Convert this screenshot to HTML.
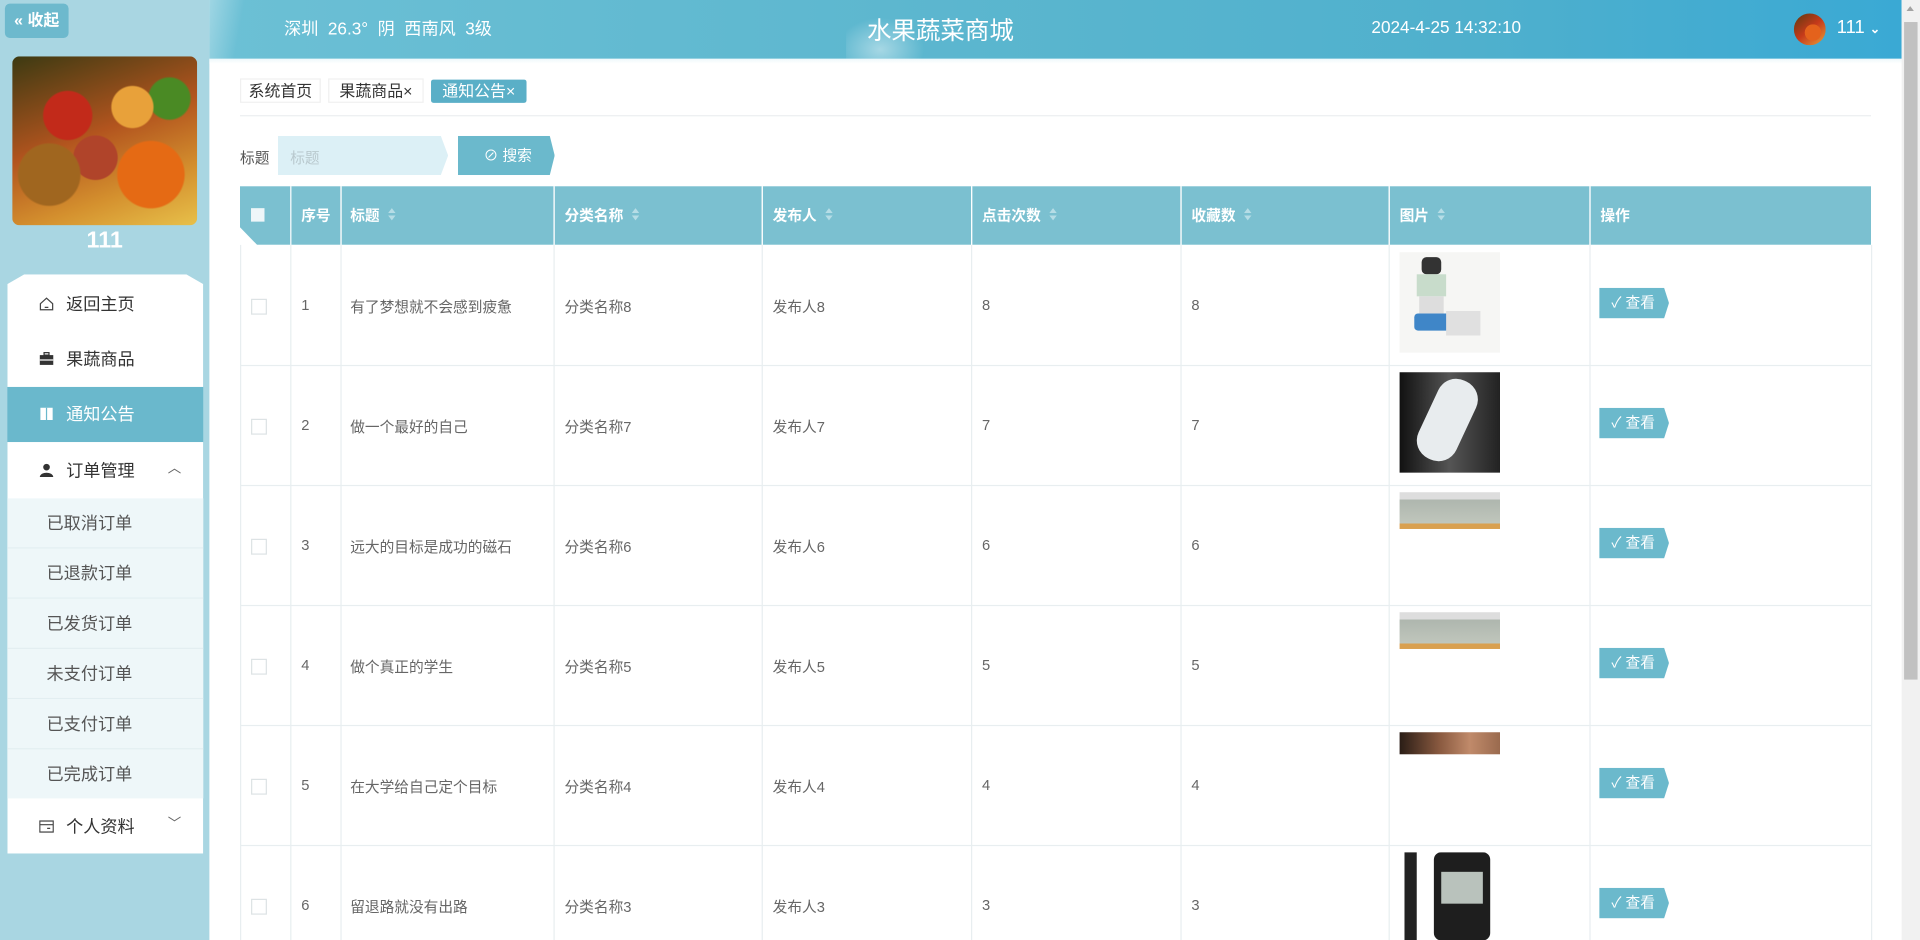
<!DOCTYPE html>
<html><head><meta charset="utf-8">
<style>
html,body{margin:0;padding:0;width:1920px;height:940px;overflow:hidden;background:#fff;}
#w{position:absolute;left:0;top:0;width:1568px;height:768px;transform:scale(1.2244898);transform-origin:0 0;font-family:"Liberation Sans","Noto Sans CJK SC",sans-serif;overflow:hidden;}
.a{position:absolute;}
#side{left:0;top:0;width:171px;height:768px;background:#a9d6e2;}
#hdr{left:171px;top:0;width:1382px;height:48px;background:linear-gradient(90deg,#6cc0d5 0%,#5db7cf 40%,#4fb0cd 75%,#3aa9d4 100%);color:#fff;}
.mi{position:absolute;left:6px;width:160px;height:45px;line-height:45px;font-size:14px;color:#333;}
.mi .ic{position:absolute;left:26px;top:16px;width:12px;height:12px;}
.mi .t{position:absolute;left:48px;}
.si{position:absolute;left:6px;width:160px;height:40px;line-height:40px;font-size:14px;color:#555;background:#eef7f9;border-bottom:1px solid #e2eef1;}
.si span{position:absolute;left:32px;}
.th{position:absolute;top:152px;height:48px;line-height:48px;font-size:12px;font-weight:bold;color:#fff;}
.srt{display:inline-block;margin-left:6px;vertical-align:middle;width:8px;height:12px;position:relative;top:-1px;}
.srt:before{content:"";position:absolute;left:1px;top:0;border:3px solid transparent;border-bottom:4px solid #b6dde6;border-top:0;}
.srt:after{content:"";position:absolute;left:1px;top:6px;border:3px solid transparent;border-top:4px solid #b6dde6;border-bottom:0;}
.vl{position:absolute;width:1px;background:#e8eef0;}
.td{position:absolute;font-size:12px;color:#666;}
.cb{position:absolute;left:205px;width:11px;height:11px;border:1px solid #dde3e5;background:#fff;}
.btn{position:absolute;left:1306px;width:57px;height:25px;line-height:25px;background:#6bb9cc;color:#fff;font-size:12px;clip-path:polygon(0 0,53px 0,57px 50%,53px 100%,0 100%);}
.btn span{position:absolute;left:10px;}
.img{position:absolute;left:1143px;width:82px;overflow:hidden;}
</style></head><body><div id="w">

<div id="side" class="a">
  <div class="a" style="left:4px;top:3px;width:52px;height:28px;background:#6db9cd;border-radius:4px;color:#fff;font-size:13px;font-weight:bold;line-height:28px;text-align:center;">« 收起</div>
  <div class="a" style="left:10px;top:46px;width:151px;height:138px;border-radius:6px;overflow:hidden;background:radial-gradient(circle at 30% 35%,#c22a1a 0 14%,transparent 15%),radial-gradient(circle at 65% 30%,#e8a13a 0 12%,transparent 13%),radial-gradient(circle at 75% 70%,#e56a14 0 18%,transparent 19%),radial-gradient(circle at 20% 70%,#a0661f 0 16%,transparent 17%),radial-gradient(circle at 85% 25%,#4a8a24 0 10%,transparent 11%),radial-gradient(circle at 45% 60%,#b0442a 0 15%,transparent 16%),linear-gradient(160deg,#3c3a12,#b2541e 45%,#d4902e 75%,#e7c04a);"></div>
  <div class="a" style="left:0;top:186px;width:171px;text-align:center;color:#fff;font-size:19px;font-weight:bold;">111</div>
  <div class="a" style="left:6px;top:224px;width:160px;height:473px;background:#fff;clip-path:polygon(14px 0,146px 0,160px 8px,160px 100%,0 100%,0 8px);"></div>
  <div class="mi" style="top:226px;"><svg class="ic" viewBox="0 0 12 12"><path d="M1 6 L6 1.5 L11 6 V11 H1 Z" fill="none" stroke="#444" stroke-width="1"/><path d="M4.5 9 H7.5" stroke="#444"/></svg><span class="t">返回主页</span></div>
  <div class="mi" style="top:271px;"><svg class="ic" viewBox="0 0 12 12"><rect x="0.5" y="3" width="11" height="8" fill="#333"/><rect x="4" y="1" width="4" height="2" fill="none" stroke="#333"/><rect x="0.5" y="6.5" width="11" height="1" fill="#fff"/></svg><span class="t">果蔬商品</span></div>
  <div class="mi" style="top:316px;background:#6ab8cc;color:#fff;"><svg class="ic" viewBox="0 0 12 12"><rect x="1" y="1" width="10" height="10" fill="#fff"/><rect x="5.5" y="1" width="1" height="10" fill="#6ab8cc"/></svg><span class="t">通知公告</span></div>
  <div class="mi" style="top:362px;"><svg class="ic" viewBox="0 0 12 12"><circle cx="6" cy="3.5" r="2.7" fill="#333"/><path d="M0.5 11.5 C1 7,11 7,11.5 11.5 Z" fill="#333"/></svg><span class="t">订单管理</span><span style="position:absolute;left:131px;top:-1px;font-size:11px;color:#666;">︿</span></div>
  <div class="si" style="top:407px;"><span>已取消订单</span></div>
  <div class="si" style="top:448px;"><span>已退款订单</span></div>
  <div class="si" style="top:489px;"><span>已发货订单</span></div>
  <div class="si" style="top:530px;"><span>未支付订单</span></div>
  <div class="si" style="top:571px;"><span>已支付订单</span></div>
  <div class="si" style="top:612px;border-bottom:0;"><span>已完成订单</span></div>
  <div class="mi" style="top:653px;"><svg class="ic" viewBox="0 0 12 12"><rect x="0.5" y="1.5" width="11" height="9" fill="none" stroke="#444"/><path d="M0.5 4.5 H11.5 M6.5 7.5 H9" stroke="#444"/></svg><span class="t">个人资料</span><span style="position:absolute;left:131px;top:-2px;font-size:11px;color:#666;">﹀</span></div>
</div>

<div id="hdr" class="a">
  <div class="a" style="left:0;top:0;width:40px;height:48px;background:linear-gradient(100deg,rgba(255,255,255,.35),transparent 60%);"></div>
  <div class="a" style="left:520px;top:10px;width:70px;height:38px;background:radial-gradient(ellipse at 40% 80%,rgba(255,255,255,.45),transparent 60%);"></div>
  <div class="a" style="left:61px;top:13px;font-size:14px;">深圳&nbsp; 26.3°&nbsp; 阴&nbsp; 西南风&nbsp; 3级</div>
  <div class="a" style="left:537px;top:9px;font-size:20px;">水果蔬菜商城</div>
  <div class="a" style="left:949px;top:14px;font-size:14px;">2024-4-25 14:32:10</div>
  <div class="a" style="left:1294px;top:11px;width:26px;height:26px;border-radius:50%;background:radial-gradient(circle at 60% 60%,#e4621c 0 30%,transparent 31%),linear-gradient(140deg,#5a3a10,#c63a1a 50%,#e9a038);"></div>
  <div class="a" style="left:1329px;top:14px;font-size:15px;">111 <span style="font-size:10px;font-weight:bold;">⌄</span></div>
</div>
<div class="a" style="left:171px;top:48px;width:1382px;height:4px;background:linear-gradient(#eef8fb,#fff);"></div>

<div class="a" style="left:1553px;top:0;width:15px;height:768px;background:#f1f1f1;"></div>
<div class="a" style="left:1555px;top:18px;width:11px;height:537px;background:#c1c1c1;"></div>
<div class="a" style="left:1557px;top:5px;border:3px solid transparent;border-bottom:4px solid #a3a3a3;border-top:0;"></div>

<!-- tabs -->
<div class="a" style="left:196px;top:64px;width:66px;height:20px;line-height:20px;font-size:13px;color:#333;text-align:center;border:1px solid #f0f0f0;box-sizing:border-box;">系统首页</div>
<div class="a" style="left:268px;top:64px;width:78px;height:20px;line-height:20px;font-size:13px;color:#333;text-align:center;border:1px solid #f0f0f0;box-sizing:border-box;">果蔬商品×</div>
<div class="a" style="left:352px;top:65px;width:78px;height:19px;line-height:19px;font-size:13px;color:#fff;text-align:center;background:#5aafc7;border-radius:2px;">通知公告×</div>
<div class="a" style="left:196px;top:94px;width:1332px;height:1px;background:#eceff0;"></div>

<!-- search -->
<div class="a" style="left:196px;top:120px;font-size:12px;color:#555;">标题</div>
<div class="a" style="left:227px;top:111px;width:139px;height:32px;background:#dcf0f6;clip-path:polygon(0 0,133px 0,139px 50%,133px 100%,0 100%);"></div>
<div class="a" style="left:237px;top:120px;font-size:12px;color:#b9c9ce;">标题</div>
<div class="a" style="left:374px;top:111px;width:79px;height:32px;background:#6bb9cc;clip-path:polygon(0 0,75px 0,79px 50%,75px 100%,0 100%);color:#fff;font-size:12px;line-height:32px;"><span style="position:absolute;left:21px;">⊘ 搜索</span></div>

<!-- table header -->
<div class="a" style="left:196px;top:152px;width:1332px;height:48px;background:#7bc0d0;clip-path:polygon(0 0,100% 0,100% 100%,14px 100%,0 70%);"></div>
<div class="a" style="left:205px;top:170px;width:11px;height:11px;background:#eef6f9;"></div>
<div class="th" style="left:246px;">序号</div>
<div class="th" style="left:286px;">标题<i class="srt"></i></div>
<div class="th" style="left:461px;">分类名称<i class="srt"></i></div>
<div class="th" style="left:631px;">发布人<i class="srt"></i></div>
<div class="th" style="left:802px;">点击次数<i class="srt"></i></div>
<div class="th" style="left:973px;">收藏数<i class="srt"></i></div>
<div class="th" style="left:1143px;">图片<i class="srt"></i></div>
<div class="th" style="left:1307px;">操作</div>
<div class="vl" style="left:237px;top:200px;height:568px;"></div>
<div class="vl" style="left:278px;top:152px;height:616px;"></div>
<div class="vl" style="left:452px;top:152px;height:616px;"></div>
<div class="vl" style="left:622px;top:152px;height:616px;"></div>
<div class="vl" style="left:793px;top:152px;height:616px;"></div>
<div class="vl" style="left:964px;top:152px;height:616px;"></div>
<div class="vl" style="left:1134px;top:152px;height:616px;"></div>
<div class="vl" style="left:1298px;top:152px;height:616px;"></div>
<div class="vl" style="left:1528px;top:200px;height:568px;"></div>
<div class="vl" style="left:196px;top:200px;height:568px;"></div>
<div class="vl" style="left:237px;top:152px;height:48px;background:#fff;"></div>
<div class="vl" style="left:278px;top:152px;height:48px;background:#fff;"></div>
<div class="vl" style="left:452px;top:152px;height:48px;background:#fff;"></div>
<div class="vl" style="left:622px;top:152px;height:48px;background:#fff;"></div>
<div class="vl" style="left:793px;top:152px;height:48px;background:#fff;"></div>
<div class="vl" style="left:964px;top:152px;height:48px;background:#fff;"></div>
<div class="vl" style="left:1134px;top:152px;height:48px;background:#fff;"></div>
<div class="vl" style="left:1298px;top:152px;height:48px;background:#fff;"></div>

<!-- rows -->
<div class="a" style="left:196px;top:298px;width:1332px;height:1px;background:#e8eef0;"></div>
<div class="a" style="left:196px;top:396px;width:1332px;height:1px;background:#e8eef0;"></div>
<div class="a" style="left:196px;top:494px;width:1332px;height:1px;background:#e8eef0;"></div>
<div class="a" style="left:196px;top:592px;width:1332px;height:1px;background:#e8eef0;"></div>
<div class="a" style="left:196px;top:690px;width:1332px;height:1px;background:#e8eef0;"></div>

<div class="cb" style="top:244px;"></div><div class="td" style="left:246px;top:242px;">1</div><div class="td" style="left:286px;top:242px;">有了梦想就不会感到疲惫</div><div class="td" style="left:461px;top:242px;">分类名称8</div><div class="td" style="left:631px;top:242px;">发布人8</div><div class="td" style="left:802px;top:242px;">8</div><div class="td" style="left:973px;top:242px;">8</div>
<div class="cb" style="top:342px;"></div><div class="td" style="left:246px;top:340px;">2</div><div class="td" style="left:286px;top:340px;">做一个最好的自己</div><div class="td" style="left:461px;top:340px;">分类名称7</div><div class="td" style="left:631px;top:340px;">发布人7</div><div class="td" style="left:802px;top:340px;">7</div><div class="td" style="left:973px;top:340px;">7</div>
<div class="cb" style="top:440px;"></div><div class="td" style="left:246px;top:438px;">3</div><div class="td" style="left:286px;top:438px;">远大的目标是成功的磁石</div><div class="td" style="left:461px;top:438px;">分类名称6</div><div class="td" style="left:631px;top:438px;">发布人6</div><div class="td" style="left:802px;top:438px;">6</div><div class="td" style="left:973px;top:438px;">6</div>
<div class="cb" style="top:538px;"></div><div class="td" style="left:246px;top:536px;">4</div><div class="td" style="left:286px;top:536px;">做个真正的学生</div><div class="td" style="left:461px;top:536px;">分类名称5</div><div class="td" style="left:631px;top:536px;">发布人5</div><div class="td" style="left:802px;top:536px;">5</div><div class="td" style="left:973px;top:536px;">5</div>
<div class="cb" style="top:636px;"></div><div class="td" style="left:246px;top:634px;">5</div><div class="td" style="left:286px;top:634px;">在大学给自己定个目标</div><div class="td" style="left:461px;top:634px;">分类名称4</div><div class="td" style="left:631px;top:634px;">发布人4</div><div class="td" style="left:802px;top:634px;">4</div><div class="td" style="left:973px;top:634px;">4</div>
<div class="cb" style="top:734px;"></div><div class="td" style="left:246px;top:732px;">6</div><div class="td" style="left:286px;top:732px;">留退路就没有出路</div><div class="td" style="left:461px;top:732px;">分类名称3</div><div class="td" style="left:631px;top:732px;">发布人3</div><div class="td" style="left:802px;top:732px;">3</div><div class="td" style="left:973px;top:732px;">3</div>

<!-- images -->
<div class="img" style="top:206px;height:82px;background:#f6f6f4;">
  <div class="a" style="left:18px;top:4px;width:16px;height:14px;background:#333;border-radius:4px;"></div>
  <div class="a" style="left:14px;top:18px;width:24px;height:18px;background:#c8dccb;"></div>
  <div class="a" style="left:16px;top:36px;width:20px;height:14px;background:#ddd;"></div>
  <div class="a" style="left:12px;top:50px;width:30px;height:14px;background:#3f86c8;border-radius:3px;"></div>
  <div class="a" style="left:38px;top:48px;width:28px;height:20px;background:#e0e0e0;"></div>
</div>
<div class="img" style="top:304px;height:82px;background:linear-gradient(90deg,#111 0%,#555 50%,#222 100%);">
  <div class="a" style="left:22px;top:4px;width:34px;height:70px;background:#e8ecee;border-radius:16px;transform:rotate(25deg);"></div>
</div>
<div class="img" style="top:402px;height:30px;background:linear-gradient(#ddd 0,#ddd 20%,#aeb6ae 20%,#c0c6bc 85%,#d9a050 85%);"></div>
<div class="img" style="top:500px;height:30px;background:linear-gradient(#ddd 0,#ddd 20%,#aeb6ae 20%,#c0c6bc 85%,#d9a050 85%);"></div>
<div class="img" style="top:598px;height:18px;background:linear-gradient(90deg,#2a1d16,#8a5a40 40%,#c08a6a 70%,#9a6a4e);"></div>
<div class="img" style="top:696px;height:72px;background:#fff;">
  <div class="a" style="left:4px;top:0;width:10px;height:72px;background:#222;"></div>
  <div class="a" style="left:28px;top:0;width:46px;height:72px;background:#1e1e1e;border-radius:6px;"></div>
  <div class="a" style="left:34px;top:16px;width:34px;height:26px;background:#b9c2bc;"></div>
</div>

<!-- buttons -->
<div class="btn" style="top:235px;"><span>✓ 查看</span></div>
<div class="btn" style="top:333px;"><span>✓ 查看</span></div>
<div class="btn" style="top:431px;"><span>✓ 查看</span></div>
<div class="btn" style="top:529px;"><span>✓ 查看</span></div>
<div class="btn" style="top:627px;"><span>✓ 查看</span></div>
<div class="btn" style="top:725px;"><span>✓ 查看</span></div>

</div></body></html>
